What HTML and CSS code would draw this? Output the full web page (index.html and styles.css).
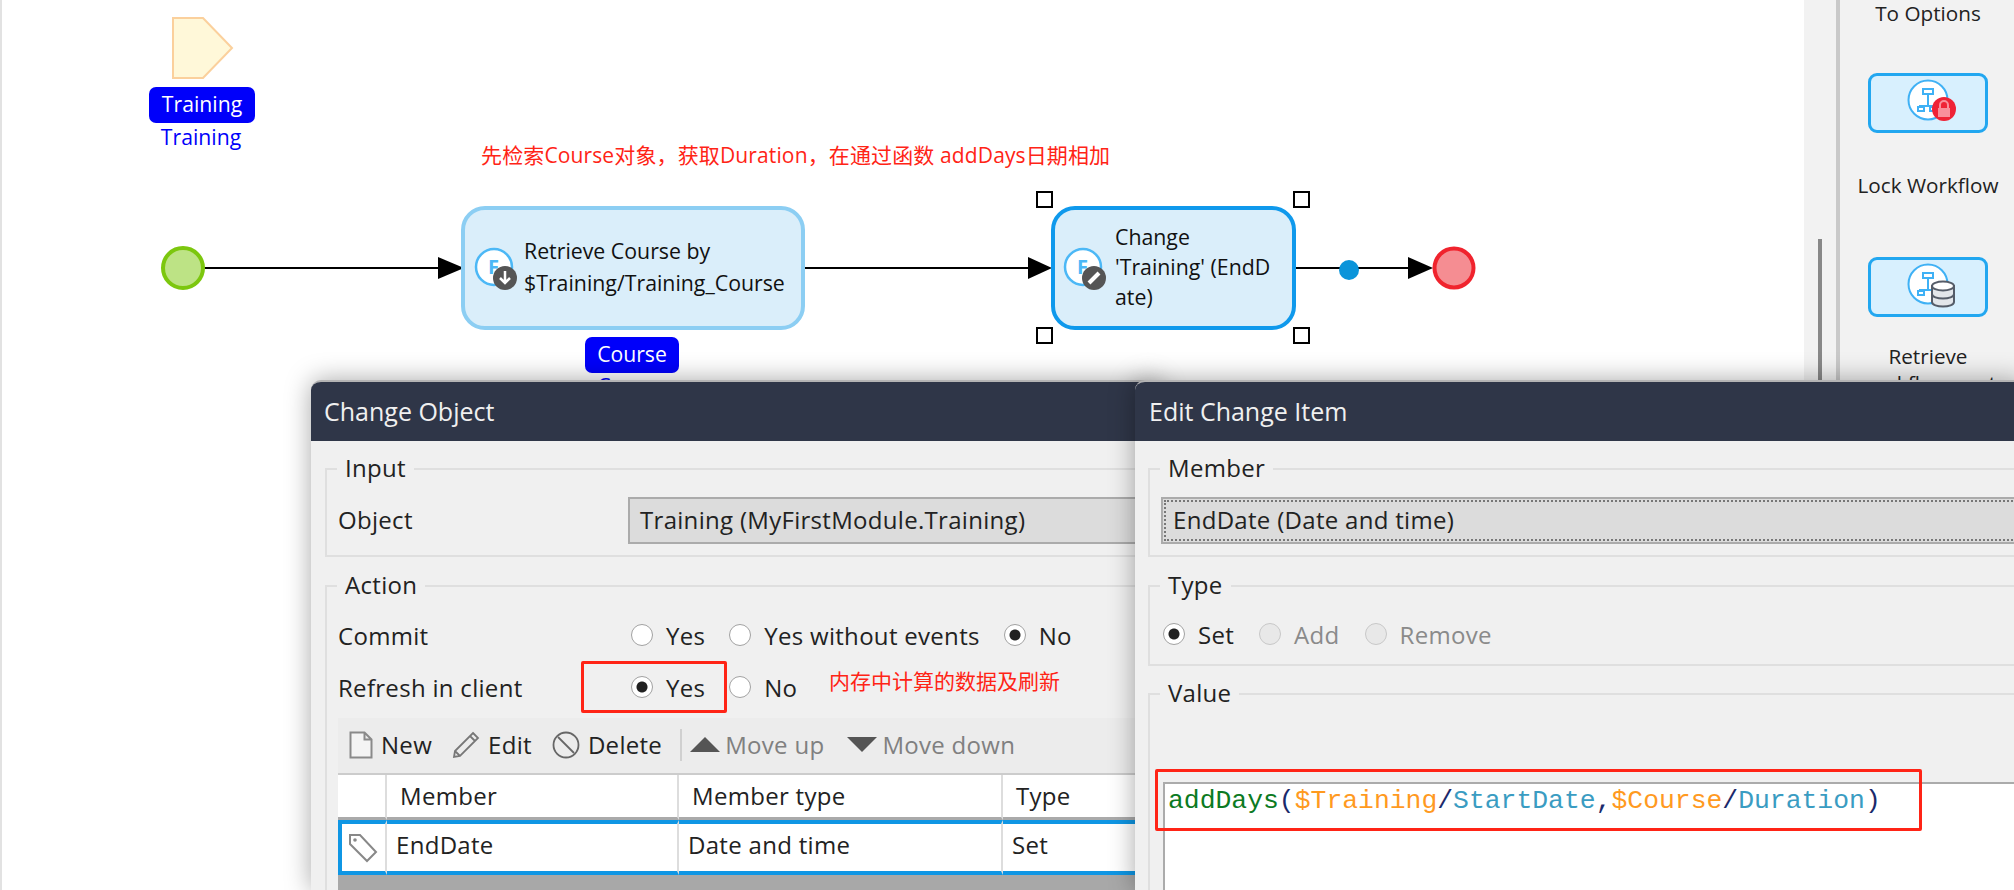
FILE: index.html
```html
<!DOCTYPE html>
<html lang="en">
<head>
  <meta charset="UTF-8" />
  <title>Microflow editor</title>
  <link rel="stylesheet" href="styles.css">
</head>
<body>
  <div class="desk">
    <main class="canvas">
      <svg class="wires" width="1804" height="890">
        <polygon points="173,18 203,18 232,48 203,78 173,78" fill="#fff8d9" stroke="#fbd09c" stroke-width="2" />
        <line x1="203" y1="268" x2="440" y2="268" stroke="#000" stroke-width="2" />
        <polygon points="438,257 464,268 438,279" fill="#000" />
        <line x1="804" y1="268" x2="1030" y2="268" stroke="#000" stroke-width="2" />
        <polygon points="1028,257 1052,268 1028,279" fill="#000" />
        <line x1="1295" y1="268" x2="1410" y2="268" stroke="#000" stroke-width="2" />
        <polygon points="1408,257 1433,268 1408,279" fill="#000" />
        <circle cx="183" cy="268" r="20" fill="#bde385" stroke="#7cc70e" stroke-width="4" />
        <circle cx="1349" cy="270" r="10" fill="#0a94da" />
        <circle cx="1454" cy="268" r="19.5" fill="#f58d92" stroke="#f0232d" stroke-width="4" />
      </svg>

      <div class="entity entity-training">Training</div>
      <div class="entity-name name-training">Training</div>
      <div class="note note-top">先检索Course对象，获取Duration，在通过函数 addDays日期相加</div>

      <div class="activity activity-retrieve">
        <span class="action-icon">
          <svg width="50" height="50" viewBox="0 0 50 50">
            <circle cx="20" cy="20" r="18" fill="#fff" stroke="#4cb8f6" stroke-width="2.5" />
            <text x="14" y="27" class="action-letter">F</text>
            <circle cx="31" cy="31" r="12" fill="#555" />
            <path d="M31 24v12M26 31l5 5 5-5" fill="none" stroke="#fff" stroke-width="2.5" />
          </svg>
        </span>
        <span class="activity-text">Retrieve Course by<br>$Training/Training_Course</span>
      </div>
      <div class="entity entity-course">Course</div>
      <div class="entity-name name-course">Course</div>

      <div class="activity activity-change">
        <span class="action-icon">
          <svg width="50" height="50" viewBox="0 0 50 50">
            <circle cx="20" cy="20" r="18" fill="#fff" stroke="#4cb8f6" stroke-width="2.5" />
            <text x="14" y="27" class="action-letter">F</text>
            <circle cx="31" cy="31" r="12" fill="#555" />
            <path d="M26 36l10-10" fill="none" stroke="#fff" stroke-width="4" />
          </svg>
        </span>
        <span class="activity-text">Change<br>'Training' (EndD<br>ate)</span>
      </div>
      <span class="handle handle-tl"></span>
      <span class="handle handle-tr"></span>
      <span class="handle handle-bl"></span>
      <span class="handle handle-br"></span>
    </main>

    <div class="gutter"><span class="scroll-thumb"></span></div>

    <aside class="toolbox">
      <div class="tool-label">To Options</div>
      <div class="tool-btn">
        <svg width="60" height="50" viewBox="0 0 60 50">
          <circle cx="26" cy="22" r="19.500" fill="#fff" stroke="#3fb1f5" stroke-width="2" />
          <path d="M21 11h10v5H21zM26 16v12M17 28h18M19 29h-3v4h6v-4zM31 29h3v4h-6v-4z" fill="none" stroke="#3fb1f5" stroke-width="2" />
          <circle cx="42" cy="31" r="12" fill="#ef2336" />
          <rect x="36" y="30" width="12" height="9" fill="#f98f9b" />
          <path d="M38 30v-3a4 4 0 0 1 8 0v3" fill="none" stroke="#f98f9b" stroke-width="2" />
        </svg>
      </div>
      <div class="tool-label tool-label-lock">Lock Workflow</div>
      <div class="tool-btn tool-btn-next">
        <svg width="60" height="50" viewBox="0 0 60 50">
          <circle cx="26" cy="22" r="19.500" fill="#fff" stroke="#3fb1f5" stroke-width="2" />
          <path d="M21 11h10v5H21zM26 16v12M17 28h18M19 29h-3v4h6v-4z" fill="none" stroke="#3fb1f5" stroke-width="2" />
          <path d="M30 24v16c0 6 22 6 22 0V24z" fill="#e3e6ea" stroke="#555c68" stroke-width="2" />
          <ellipse cx="41" cy="24" rx="11" ry="4.500" fill="#fff" stroke="#555c68" stroke-width="2" />
          <path d="M30 32c0 6 22 6 22 0" fill="none" stroke="#555c68" stroke-width="2" />
        </svg>
      </div>
      <div class="tool-label tool-label-retrieve">Retrieve<br>workflow cont</div>
    </aside>

    <section class="dialog dialog-object">
      <header class="dialog-title">Change Object</header>
      <div class="dialog-body">
        <fieldset class="group group-input">
          <legend>Input</legend>
          <div class="form-row row-select">
            <span class="row-label">Object</span>
            <div class="select-box">Training (MyFirstModule.Training)</div>
          </div>
        </fieldset>

        <fieldset class="group group-action">
          <legend>Action</legend>
          <div class="form-row row-radio row-commit">
            <span>Commit</span>
            <div class="radios">
              <label class="radio">Yes</label>
              <label class="radio">Yes without events</label>
              <label class="radio on">No</label>
            </div>
          </div>
          <div class="form-row row-radio row-refresh">
            <span>Refresh in client</span>
            <div class="radios">
              <label class="radio on">Yes</label>
              <label class="radio">No</label>
            </div>
          </div>

          <div class="toolbar">
            <span class="tool">
              <svg width="24" height="28" viewBox="0 0 24 28"><path d="M1.500 1.500h14l7 7v18h-21zM15.500 1.500v7h7" fill="#f4f4f4" stroke="#8a8a8a" stroke-width="2" /></svg>
              New
            </span>
            <span class="tool">
              <svg width="28" height="28" viewBox="0 0 28 28"><path d="M21 2l5 5L8 25l-6 1 1-6zM18 5l5 5M3 20l5 5" fill="none" stroke="#777" stroke-width="1.800" /></svg>
              Edit
            </span>
            <span class="tool">
              <svg width="28" height="28" viewBox="0 0 28 28"><circle cx="14" cy="14" r="12.500" fill="none" stroke="#666" stroke-width="1.800" /><path d="M6 6l16 16" stroke="#666" stroke-width="1.800" /></svg>
              Delete
            </span>
            <span class="tool-sep"></span>
            <span class="tool tool-off">
              <svg width="30" height="15" viewBox="0 0 30 15"><polygon points="15,0 30,15 0,15" fill="#555" /></svg>
              Move up
            </span>
            <span class="tool tool-off">
              <svg width="30" height="15" viewBox="0 0 30 15"><polygon points="0,0 30,0 15,15" fill="#555" /></svg>
              Move down
            </span>
          </div>

          <table class="grid">
            <colgroup>
              <col class="col-icon"><col class="col-member"><col class="col-type"><col>
            </colgroup>
            <thead>
              <tr><th></th><th>Member</th><th>Member type</th><th>Type</th></tr>
            </thead>
            <tbody>
              <tr>
                <td class="cell-tag">
                  <svg width="30" height="30" viewBox="0 0 30 30"><path d="M2 2h10l16 17-9 9L2 11z" fill="#fff" stroke="#888" stroke-width="2" /><circle cx="7" cy="7" r="1.800" fill="#888" /></svg>
                </td>
                <td>EndDate</td><td>Date and time</td><td>Set</td>
              </tr>
            </tbody>
          </table>
          <div class="grid-empty"></div>
        </fieldset>
      </div>
    </section>

    <section class="dialog dialog-item">
      <header class="dialog-title">Edit Change Item</header>
      <div class="dialog-body">
        <fieldset class="group group-input">
          <legend>Member</legend>
          <div class="select-box select-focus">EndDate (Date and time)</div>
        </fieldset>
        <fieldset class="group group-type">
          <legend>Type</legend>
          <div class="radios">
            <label class="radio on">Set</label>
            <label class="radio off">Add</label>
            <label class="radio off">Remove</label>
          </div>
        </fieldset>
        <fieldset class="group group-value">
          <legend>Value</legend>
          <div class="code-box"><span class="c-fn">addDays</span><span class="c-op">(</span><span class="c-var">$Training</span><span class="c-op">/</span><span class="c-attr">StartDate</span><span class="c-op">,</span><span class="c-var">$Course</span><span class="c-op">/</span><span class="c-attr">Duration</span><span class="c-op">)</span></div>
        </fieldset>
      </div>
    </section>

    <div class="mark mark-refresh"></div>
    <div class="note note-refresh">内存中计算的数据及刷新</div>
    <div class="mark mark-code"></div>
  </div>
</body>
</html>
```

FILE: styles.css
```css
html, body {
  margin: 0;
  padding: 0;
}

body {
  font-family: "Open Sans", "Noto Sans", "Noto Sans CJK SC", sans-serif;
  font-size: 24px;
  letter-spacing: 0.3px;
  color: #222;
  background-color: #fff;
}

.desk {
  position: relative;
  display: flex;
  width: 2014px;
  height: 890px;
  overflow: hidden;
}

/* diagram */
.canvas {
  position: relative;
  width: 1804px;
  flex: none;
  background-color: #fff;
  border-left: 2px solid #e2e2e2;
  box-sizing: border-box;
}

.wires {
  position: absolute;
  left: -2px;
  top: 0;
}

.entity {
  position: absolute;
  height: 36px;
  line-height: 33px;
  font-size: 21.200px;
  letter-spacing: 0;
  text-align: center;
  color: #fff;
  background-color: #0000fa;
  border-radius: 7px;
}

.entity-training {
  left: 147px;
  top: 87px;
  width: 106px;
}

.entity-course {
  left: 583px;
  top: 337px;
  width: 94px;
}

.entity-name {
  position: absolute;
  color: #0000fa;
  font-size: 21.200px;
  letter-spacing: 0;
  line-height: 28px;
  text-align: center;
}

.name-training {
  left: 146px;
  top: 123px;
  width: 106px;
}

.name-course {
  left: 583px;
  top: 372px;
  width: 94px;
}

.note {
  position: absolute;
  font-size: 21px;
  letter-spacing: 0.130px;
  line-height: 28px;
  color: #ff2416;
  white-space: nowrap;
}

.note-top {
  left: 479px;
  top: 141px;
}

.note-refresh {
  left: 829px;
  top: 667px;
  letter-spacing: 0;
}

.activity {
  position: absolute;
  display: flex;
  align-items: center;
  box-sizing: border-box;
  top: 206px;
  height: 124px;
  padding-bottom: 2px;
  background-color: #daeefa;
  border: 4px solid #8ccef3;
  border-radius: 24px;
  line-height: 32px;
  font-size: 21.300px;
  letter-spacing: 0;
  color: #111;
}

.activity-retrieve {
  left: 459px;
  width: 344px;
  padding-left: 9px;
}

.activity-change {
  left: 1049px;
  width: 245px;
  padding-left: 8px;
  border-color: #0f99ec;
  line-height: 30px;
}

.action-icon {
  flex: none;
  width: 50px;
  height: 50px;
  margin-top: 10px;
}

.activity-change .action-icon {
  width: 52px;
}

.action-letter {
  font-size: 20px;
  font-weight: 700;
  fill: #4cb8f6;
}

.handle {
  position: absolute;
  box-sizing: border-box;
  width: 17px;
  height: 17px;
  background-color: #fff;
  border: 2px solid #000;
}

.handle-tl { left: 1034px; top: 191px; }
.handle-tr { left: 1291px; top: 191px; }
.handle-bl { left: 1034px; top: 327px; }
.handle-br { left: 1291px; top: 327px; }

/* right side */
.gutter {
  position: relative;
  flex: none;
  width: 32px;
  background-color: #f2f2f2;
}

.scroll-thumb {
  position: absolute;
  left: 14px;
  top: 239px;
  width: 4px;
  height: 150px;
  background-color: #888;
}

.toolbox {
  flex: none;
  display: flex;
  flex-direction: column;
  align-items: center;
  width: 178px;
  padding-left: 2px;
  background-color: #f2f2f2;
  border-left: 4px solid #c9c9c9;
  box-sizing: border-box;
}

.tool-label {
  line-height: 27px;
  font-size: 20.700px;
  letter-spacing: 0;
  text-align: center;
  white-space: nowrap;
}

.tool-btn {
  display: flex;
  align-items: center;
  justify-content: center;
  box-sizing: border-box;
  width: 120px;
  height: 60px;
  margin-top: 46px;
  background-color: #d8f0fe;
  border: 3px solid #22a7f0;
  border-radius: 9px;
}

.tool-btn svg {
  margin-left: 8px;
}

.tool-label-lock {
  margin-top: 39px;
}

.tool-btn-next {
  margin-top: 58px;
}

.tool-label-retrieve {
  margin-top: 26px;
}

/* dialogs */
.dialog {
  position: absolute;
  top: 380px;
  height: 510px;
  box-sizing: border-box;
  overflow: hidden;
  background-color: #f0f0f0;
  border-top: 2px solid #b4b4b4;
  border-radius: 10px 10px 0 0;
  box-shadow: 0 0 26px rgba(0, 0, 0, 0.35);
}

.dialog-object {
  left: 311px;
  width: 850px;
}

.dialog-item {
  left: 1135px;
  width: 890px;
}

.dialog-title {
  height: 59px;
  line-height: 59px;
  padding-left: 13px;
  font-size: 25px;
  letter-spacing: 0;
  color: #f0f0f0;
  background-color: #2f3648;
}

.dialog-item .dialog-title {
  padding-left: 14px;
}

.dialog-body {
  padding: 13px 0 0 14px;
}

.dialog-item .dialog-body {
  padding-left: 13px;
}

.group {
  box-sizing: border-box;
  margin: 0;
  min-width: 0;
  padding: 0 0 0 11px;
  border: 2px solid #dfdfdf;
}

.group legend {
  margin-left: -1px;
  padding: 0 8px 2px;
  line-height: 28px;
}

.group-input {
  height: 103px;
}

.group-action {
  height: 400px;
  margin-top: 14px;
}

.group-type {
  height: 95px;
  margin-top: 14px;
}

.group-value {
  height: 300px;
  margin-top: 13px;
}

.form-row {
  display: grid;
  grid-template-columns: 290px 1fr;
  align-items: center;
}

.row-select {
  margin-top: 13px;
}

.row-label {
  padding-bottom: 2px;
}

.row-radio {
  height: 40px;
}

.row-commit {
  margin-top: 14px;
}

.row-refresh {
  margin-top: 12px;
}

.select-box {
  box-sizing: border-box;
  height: 47px;
  line-height: 41px;
  padding-left: 10px;
  background-color: #dcdcdc;
  border: 2px solid #ababab;
}

.group-input > .select-box {
  margin-top: 13px;
}

.select-focus {
  outline: 2px dotted #777;
  outline-offset: -5px;
}

.radios {
  display: flex;
  align-items: center;
  gap: 24px;
  padding-left: 3px;
}

.group-type .radios {
  height: 40px;
  margin-top: 13px;
  padding-left: 2px;
  gap: 25px;
}

.radio {
  display: flex;
  align-items: center;
  gap: 13px;
}

.radio::before {
  content: "";
  box-sizing: border-box;
  width: 22px;
  height: 22px;
  background-color: #fff;
  border: 1px solid #a2a2a2;
  border-radius: 50%;
}

.radio.on::before {
  background: radial-gradient(circle, #222 0, #222 5px, #fff 6px);
}

.radio.off {
  color: #8a8a8a;
}

.radio.off::before {
  background-color: #e8e8e8;
  border-color: #c8c8c8;
}

.toolbar {
  display: flex;
  align-items: center;
  gap: 20px;
  box-sizing: border-box;
  height: 55px;
  margin-top: 11px;
  padding: 0 0 2px 11px;
  background-color: #ececec;
}

.tool {
  display: flex;
  align-items: center;
  gap: 8px;
}

.tool-off {
  color: #808080;
  gap: 5px;
}

.tool-off + .tool-off {
  margin-left: 3px;
}

.tool-sep {
  width: 2px;
  height: 32px;
  margin: 0 -12px 0 -2px;
  background-color: #d0d0d0;
}

.grid {
  width: 820px;
  table-layout: fixed;
  border-collapse: separate;
  border-spacing: 0;
  background-color: #fff;
  border-top: 2px solid #ccc;
  line-height: 30px;
}

.col-icon { width: 49px; }
.col-member { width: 292px; }
.col-type { width: 324px; }

.grid th {
  height: 42px;
  padding: 0 0 0 13px;
  font-weight: 400;
  text-align: left;
  border-right: 2px solid #ddd;
  border-bottom: 3px solid #aaa;
}

.grid td {
  height: 41px;
  padding: 0 0 6px 9px;
  border-top: 4px solid #0f96e4;
  border-bottom: 4px solid #0f96e4;
  border-right: 2px solid #ddd;
}

.grid td:last-child,
.grid th:last-child {
  border-right: none;
}

.grid .cell-tag {
  padding: 0 0 0 6px;
  line-height: 0;
  border-left: 4px solid #0f96e4;
}

.grid-empty {
  height: 40px;
  background-color: #a8a8a8;
}

.code-box {
  box-sizing: border-box;
  height: 200px;
  margin-top: 73px;
  margin-left: 2px;
  padding: 2px 0 0 3px;
  font-family: "Liberation Mono", monospace;
  font-size: 26.400px;
  letter-spacing: 0;
  line-height: 30px;
  white-space: nowrap;
  background-color: #fff;
  border-top: 2px solid #ababab;
  border-left: 2px solid #ababab;
}

.c-fn { color: #0b7a22; }
.c-op { color: #1b2a6b; }
.c-var { color: #ff9a1f; }
.c-attr { color: #3a9cc2; }

/* red marks drawn over the screenshot */
.mark {
  position: absolute;
  box-sizing: border-box;
  border: 3px solid #ff2416;
  border-radius: 2px;
}

.mark-refresh {
  left: 581px;
  top: 661px;
  width: 146px;
  height: 52px;
}

.mark-code {
  left: 1155px;
  top: 769px;
  width: 767px;
  height: 62px;
}
```
